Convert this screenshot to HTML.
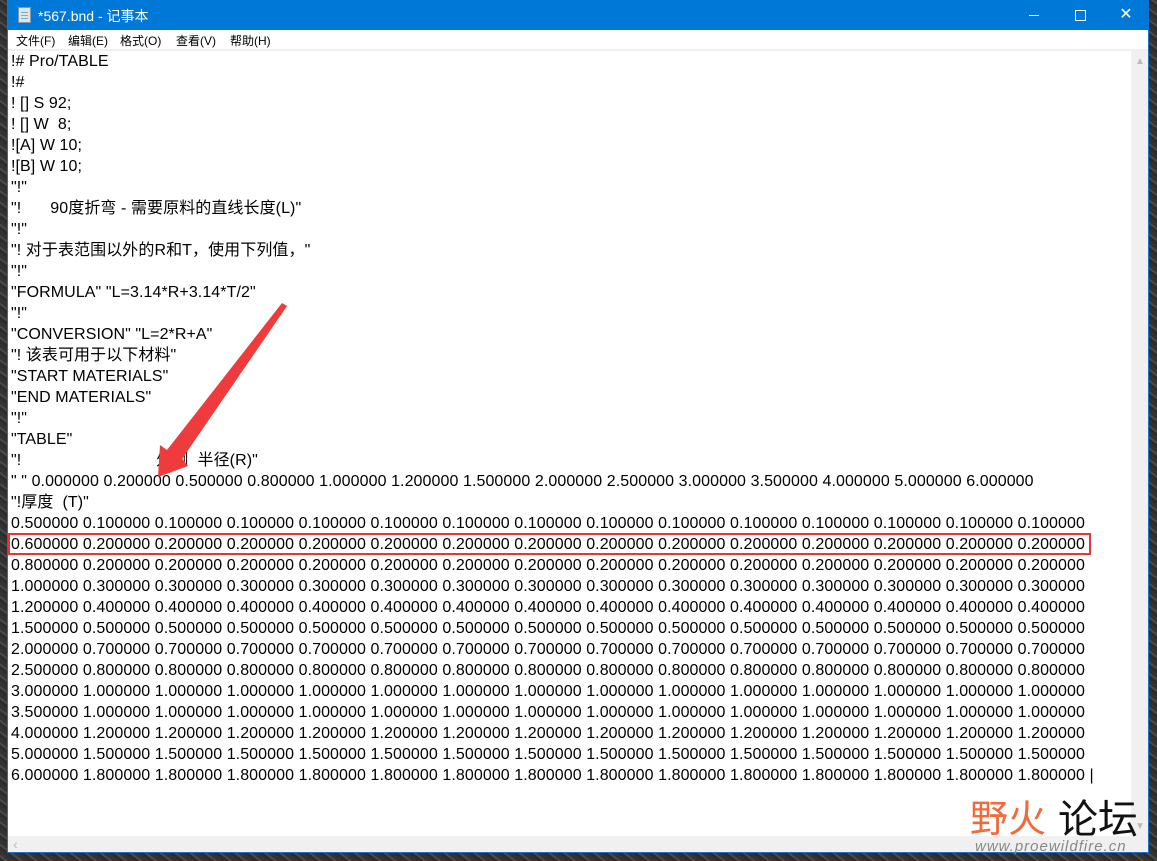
<!DOCTYPE html>
<html><head><meta charset="utf-8"><style>
html,body{margin:0;padding:0;width:1157px;height:861px;overflow:hidden;background:#3a3a38;font-family:"Liberation Sans","Noto Sans CJK SC",sans-serif}
.bg{position:absolute;inset:0;background:repeating-linear-gradient(37deg,#2c2c2b 0 3px,#4a4a47 3px 5px,#333 5px 9px)}
.win{position:absolute;left:7px;top:0;width:1142px;height:853px;background:#fff;border:1px solid #1a73c8;border-top:none;box-sizing:border-box}
.title{position:absolute;left:0;top:0;width:100%;height:30px;background:#0078d7;color:#fff;font-size:14px}
.title .t{position:absolute;left:30px;top:6px}
.ico{position:absolute;left:10px;top:7px;width:13px;height:16px;background:#dbe6ee;border:1px solid #7d9ab0;box-sizing:border-box}
.ico:before{content:"";position:absolute;left:2px;right:2px;top:4px;height:8px;background:repeating-linear-gradient(#8aa 0 1px,transparent 1px 3px)}
.ctl{position:absolute;top:0;height:30px;width:46px;color:#fff;text-align:center;line-height:30px}
.menu{position:absolute;left:0;top:30px;height:19px;width:100%;font-size:12px;color:#000;border-bottom:2px solid #f0f0f0}
.menu span{position:absolute;top:2px}
pre{position:absolute;left:3px;top:51px;margin:0;font-family:"Liberation Sans","Noto Sans CJK SC",sans-serif;font-size:16px;letter-spacing:0.08px;line-height:21px;color:#000;white-space:pre}
.vs{position:absolute;right:0;top:50px;width:17px;height:786px;background:#f0f0f0}
.hs{position:absolute;left:0;bottom:0;width:1124px;height:16px;background:#f0f0f0}
.corner{position:absolute;right:0;bottom:0;width:17px;height:16px;background:#f0f0f0}
.red{position:absolute;left:8px;top:533px;width:1083px;height:22px;border:2px solid #e83535;box-sizing:border-box}
</style></head><body>
<div class="bg"></div>
<div class="win">
<div class="title"><div class="ico"></div><span class="t">*567.bnd - 记事本</span>
<div class="ctl" style="left:1003px"><div style="position:absolute;left:18px;top:15px;width:10px;height:1px;background:#fff"></div></div>
<div class="ctl" style="left:1049px"><div style="position:absolute;left:18px;top:10px;width:9px;height:9px;border:1px solid #fff"></div></div>
<div class="ctl" style="left:1095px;font-size:16px">✕</div>
</div>
<div class="menu"><span style="left:8px">文件(F)</span><span style="left:60px">编辑(E)</span><span style="left:112px">格式(O)</span><span style="left:168px">查看(V)</span><span style="left:222px">帮助(H)</span></div>
<pre>!# Pro/TABLE
!#
! [] S 92;
! [] W  8;
![A] W 10;
![B] W 10;
"!"
"!<span style="display:inline-block;width:29px"></span>90度折弯 - 需要原料的直线长度(L)"
"!"
"! 对于表范围以外的R和T，使用下列值，"
"!"
"FORMULA" "L=3.14*R+3.14*T/2"
"!"
"CONVERSION" "L=2*R+A"
"! 该表可用于以下材料"
"START MATERIALS"
"END MATERIALS"
"!"
"TABLE"
"!<span style="display:inline-block;width:135px"></span>外侧  半径(R)"
" " 0.000000 0.200000 0.500000 0.800000 1.000000 1.200000 1.500000 2.000000 2.500000 3.000000 3.500000 4.000000 5.000000 6.000000
"!厚度  (T)"
0.500000 0.100000 0.100000 0.100000 0.100000 0.100000 0.100000 0.100000 0.100000 0.100000 0.100000 0.100000 0.100000 0.100000 0.100000
0.600000 0.200000 0.200000 0.200000 0.200000 0.200000 0.200000 0.200000 0.200000 0.200000 0.200000 0.200000 0.200000 0.200000 0.200000
0.800000 0.200000 0.200000 0.200000 0.200000 0.200000 0.200000 0.200000 0.200000 0.200000 0.200000 0.200000 0.200000 0.200000 0.200000
1.000000 0.300000 0.300000 0.300000 0.300000 0.300000 0.300000 0.300000 0.300000 0.300000 0.300000 0.300000 0.300000 0.300000 0.300000
1.200000 0.400000 0.400000 0.400000 0.400000 0.400000 0.400000 0.400000 0.400000 0.400000 0.400000 0.400000 0.400000 0.400000 0.400000
1.500000 0.500000 0.500000 0.500000 0.500000 0.500000 0.500000 0.500000 0.500000 0.500000 0.500000 0.500000 0.500000 0.500000 0.500000
2.000000 0.700000 0.700000 0.700000 0.700000 0.700000 0.700000 0.700000 0.700000 0.700000 0.700000 0.700000 0.700000 0.700000 0.700000
2.500000 0.800000 0.800000 0.800000 0.800000 0.800000 0.800000 0.800000 0.800000 0.800000 0.800000 0.800000 0.800000 0.800000 0.800000
3.000000 1.000000 1.000000 1.000000 1.000000 1.000000 1.000000 1.000000 1.000000 1.000000 1.000000 1.000000 1.000000 1.000000 1.000000
3.500000 1.000000 1.000000 1.000000 1.000000 1.000000 1.000000 1.000000 1.000000 1.000000 1.000000 1.000000 1.000000 1.000000 1.000000
4.000000 1.200000 1.200000 1.200000 1.200000 1.200000 1.200000 1.200000 1.200000 1.200000 1.200000 1.200000 1.200000 1.200000 1.200000
5.000000 1.500000 1.500000 1.500000 1.500000 1.500000 1.500000 1.500000 1.500000 1.500000 1.500000 1.500000 1.500000 1.500000 1.500000
6.000000 1.800000 1.800000 1.800000 1.800000 1.800000 1.800000 1.800000 1.800000 1.800000 1.800000 1.800000 1.800000 1.800000 1.800000 |</pre>
<div class="vs"><div style="position:absolute;left:4px;top:6px;color:#bbb;font-size:10px">▲</div><div style="position:absolute;left:4px;bottom:4px;color:#bbb;font-size:10px">▼</div></div>
<div class="hs"><div style="position:absolute;left:5px;top:0;color:#bbb;font-size:14px">‹</div></div>
<div class="corner"></div>
</div>
<div class="red"></div>
<svg style="position:absolute;left:0;top:0" width="1157" height="861">
<polygon points="282,303 287,306 182,459 188,466 158,477 160,445 167,450" fill="#ef3b3b"/>
</svg>
<div style="position:absolute;left:970px;top:796px;font-size:38px;color:#f26a3a;font-family:'Noto Sans CJK SC',sans-serif;line-height:40px">野火</div>
<div style="position:absolute;left:1058px;top:796px;font-size:40px;color:#111;font-family:'Noto Sans CJK SC',sans-serif;line-height:40px">论坛</div>
<div style="position:absolute;left:975px;top:838px;font-size:15px;color:#888;font-style:italic;font-family:'Liberation Sans',sans-serif;letter-spacing:1px">www.proewildfire.cn</div>
</body></html>
